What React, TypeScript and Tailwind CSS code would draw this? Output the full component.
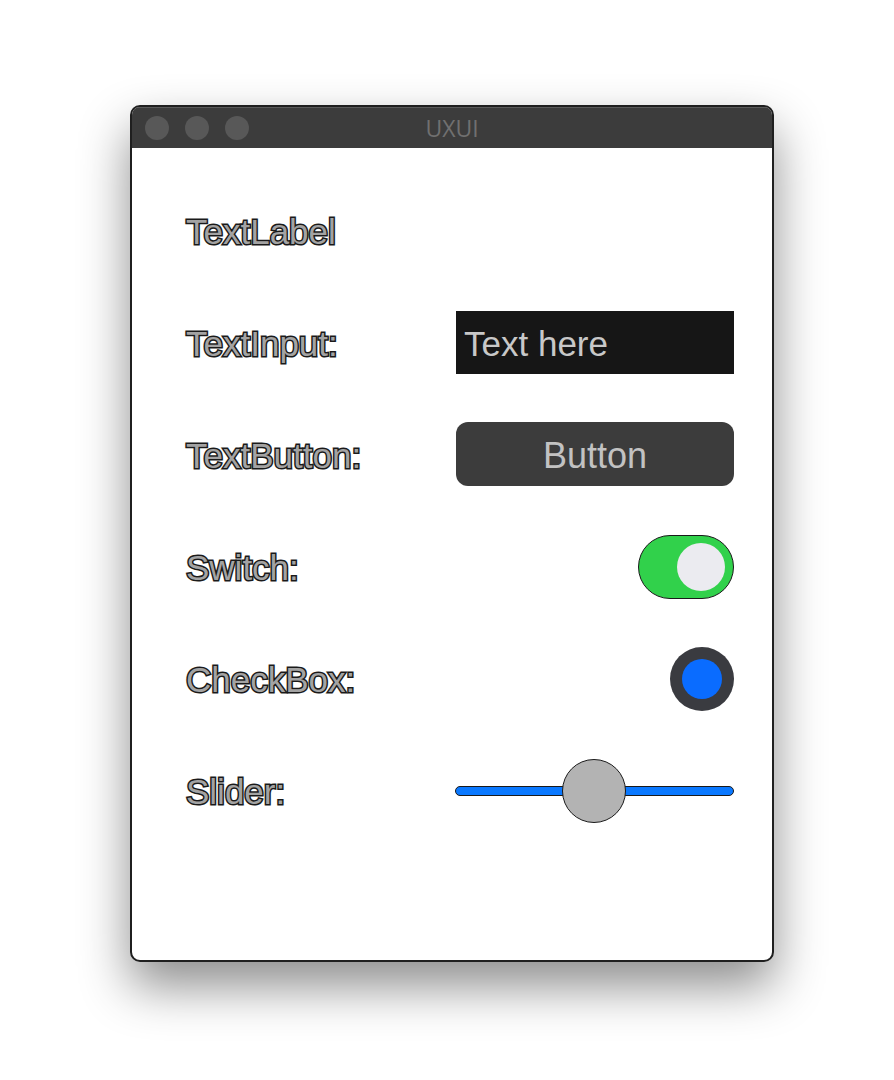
import React from 'react';

const labelClass =
  "font-['Liberation_Sans',Arial,sans-serif] text-[35px] leading-none text-[#a3a3a3] [-webkit-text-stroke:3px_#1a1a1a] [paint-order:stroke_fill]";

const Row: React.FC<{ label: string; children?: React.ReactNode }> = ({ label, children }) => (
  <div className="flex h-16 items-center justify-between">
    <span className={labelClass}>{label}</span>
    {children}
  </div>
);

const App: React.FC = () => {
  return (
    <div className="min-h-[1080px] bg-white pl-[130px] pt-[105px]">
      <div className="w-[644px] h-[857px] rounded-[10px] border-2 border-[#1f1f1f] bg-white overflow-hidden shadow-[0_24px_50px_rgba(0,0,0,0.45)] flex flex-col">
        {/* title bar */}
        <div className="relative h-[41px] bg-[#3c3c3c] border-t border-[#5a5a5a] flex items-center gap-4 pl-[13px]">
          <div className="w-6 h-6 rounded-full bg-[#585858]" />
          <div className="w-6 h-6 rounded-full bg-[#585858]" />
          <div className="w-6 h-6 rounded-full bg-[#585858]" />
          <span className="absolute inset-0 flex items-center justify-center font-['Open_Sans',sans-serif] text-[23px] text-[#707070]">
            UXUI
          </span>
        </div>

        {/* body */}
        <div className="flex flex-col gap-12 pt-[51px] pl-[54px] pr-[38px]">
          <Row label="TextLabel" />
          <Row label="TextInput:">
            <div className="w-[278px] h-[63px] mb-[2px] bg-[#161616] flex items-center pl-2 pt-1 font-['Liberation_Sans',Arial,sans-serif] text-[35px] text-[#c8c8c8]">
              Text here
            </div>
          </Row>
          <Row label="TextButton:">
            <div className="w-[278px] h-16 mb-[2px] rounded-xl bg-[#3c3c3c] flex items-center justify-center pt-1 font-['Liberation_Sans',Arial,sans-serif] text-[36px] text-[#c2c2c2]">
              Button
            </div>
          </Row>
          <Row label="Switch:">
            <div className="w-24 h-16 rounded-full bg-[#31d14b] border border-[#1a1a1a] flex items-center justify-end pr-2">
              <div className="w-12 h-12 rounded-full bg-[#ebebf0]" />
            </div>
          </Row>
          <Row label="CheckBox:">
            <div className="w-16 h-16 rounded-full bg-[#3a3b40] flex items-center justify-center">
              <div className="w-10 h-10 rounded-full bg-[#0a6cff]" />
            </div>
          </Row>
          <Row label="Slider:">
            <div className="relative w-[279px] h-16 flex items-center">
              <div className="w-full h-[10px] rounded-full bg-[#0a78ff] border border-[#1a1a1a]" />
              <div className="absolute left-[107px] top-0 w-16 h-16 rounded-full bg-[#b3b3b3] border border-[#1a1a1a]" />
            </div>
          </Row>
        </div>
      </div>
    </div>
  );
};

export default App;
